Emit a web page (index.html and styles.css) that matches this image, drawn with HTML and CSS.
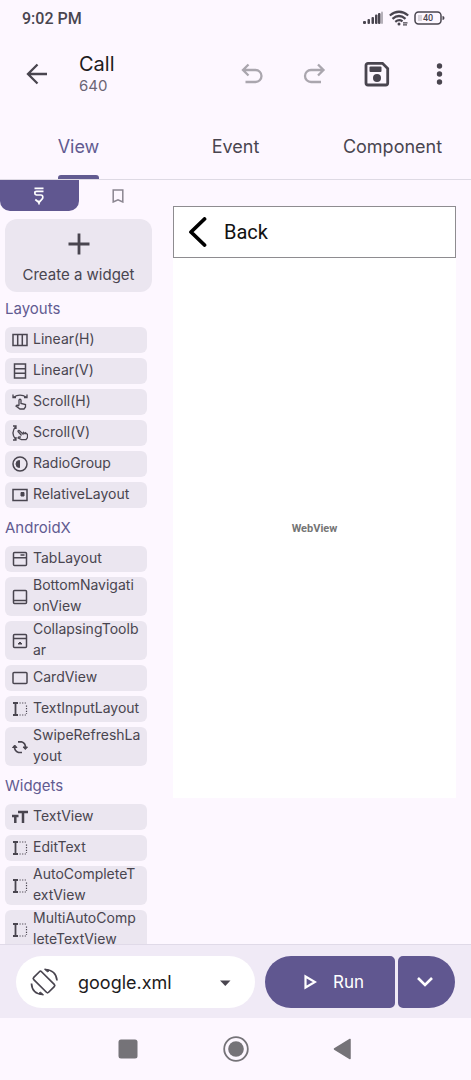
FILE: index.html
```html
<!DOCTYPE html>
<html lang="en">
<head>
    <meta charset="UTF-8">
    <meta name="viewport" content="width=device-width, initial-scale=1.0">
    <title>Call</title>
    <link rel="stylesheet" href="styles.css">
</head>
<body>
    <div class="status-bar">
        <span>9:02 PM</span>
        <div class="status-icons">
            <svg width="21" height="14" viewBox="0 0 21 14" fill="currentColor">
                <rect x="0" y="10" width="3" height="3" rx="1"/>
                <rect x="4.500" y="8" width="2.500" height="5" rx="1"/>
                <rect x="8.500" y="6" width="2.500" height="7" rx="1"/>
                <rect x="12" y="3.500" width="2.500" height="9.500" rx="1"/>
                <rect x="15" y="2" width="2.500" height="11" rx="1"/>
                <rect x="18" y="0.500" width="2" height="12.500" rx="1" opacity="0.400"/>
            </svg>
            <svg width="20" height="16" viewBox="0 0 20 16" fill="none" stroke="currentColor" stroke-width="2.200">
                <path d="M0.800 5.500Q10 -2 19.200 5.500M3.500 8.800Q10 3.200 16.500 8.800M6.300 11.800Q10 8.800 13.500 11.300"/>
                <circle cx="10" cy="14" r="1.500" fill="currentColor" stroke="none"/>
                <path d="M14 12.800h4.500M14 14.800h4" stroke-width="1.300"/>
            </svg>
            <svg width="31" height="14" viewBox="0 0 31 14">
                <rect x="1" y="1" width="26" height="12" rx="3.500" fill="none" stroke="currentColor" stroke-width="1.500"/>
                <rect x="4" y="4" width="4" height="6" fill="#d9d4dc"/>
                <path d="M28.500 5q2 0 2 2t-2 2z" fill="currentColor"/>
                <text x="14" y="10" class="battery-text">40</text>
            </svg>
        </div>
    </div>

    <header class="app-bar">
        <button class="icon-btn" aria-label="Back">
            <svg width="24" height="24" viewBox="0 0 24 24" fill="none" stroke="currentColor" stroke-width="2.300"><path d="M22 12H3.500M12.500 2.500L3 12l9.500 9.500"/></svg>
        </button>
        <div class="titles">
            <h1>Call</h1>
            <p>640</p>
        </div>
        <div class="actions">
            <button class="icon-btn faded" aria-label="Undo">
                <svg width="24" height="24" viewBox="0 0 24 24" fill="none" stroke="currentColor" stroke-width="2.300"><path d="M7.500 2.500L2 8l5.500 5.500M2 8h12.500a6 6 0 0 1 0 12H4.500"/></svg>
            </button>
            <button class="icon-btn faded" aria-label="Redo">
                <svg width="24" height="24" viewBox="0 0 24 24" fill="none" stroke="currentColor" stroke-width="2.300"><path d="M15 2.500L20.500 8 15 13.500M20.500 8H8a6 6 0 0 0 0 12h10"/></svg>
            </button>
            <button class="icon-btn" aria-label="Save">
                <svg width="26" height="26" viewBox="0 0 26 26">
                    <path d="M4 2.300h14.500L23.700 7.500V22a2 2 0 0 1-2 2H4a2 2 0 0 1-2-2V4.300a2 2 0 0 1 2-2z" fill="none" stroke="currentColor" stroke-width="2.800"/>
                    <rect x="5.500" y="5.500" width="12" height="5.500" rx="1" fill="currentColor"/>
                    <circle cx="13" cy="17" r="4" fill="currentColor"/>
                </svg>
            </button>
            <button class="icon-btn" aria-label="More">
                <svg width="24" height="24" viewBox="0 0 24 24" fill="currentColor"><circle cx="12.500" cy="4" r="2.700"/><circle cx="12.500" cy="12" r="2.700"/><circle cx="12.500" cy="20" r="2.700"/></svg>
            </button>
        </div>
    </header>

    <nav class="tabs">
        <button class="tab active"><span>View</span></button>
        <button class="tab"><span>Event</span></button>
        <button class="tab"><span>Component</span></button>
    </nav>

    <main class="editor">
        <aside class="palette">
            <div class="palette-tabs">
                <button class="palette-tab active" aria-label="Widgets">
                    <svg width="12" height="18" viewBox="0 0 12 18" fill="none" stroke="currentColor" stroke-width="1.700"><path d="M1.500 1.300h9M10.500 4.300H3.500Q1.800 4.300 1.800 6t1.700 2h4.300q2 0 2 2.200 0 1.200-.8 2L6 15.500l-3.700-3M6 13.500V17.500"/></svg>
                </button>
                <button class="palette-tab" aria-label="Favorites">
                    <svg width="12" height="14" viewBox="0 0 12 14" fill="none" stroke="currentColor" stroke-width="1.500"><path d="M1.200 1h9.600v12L6 10.800 1.200 13z"/></svg>
                </button>
            </div>

            <button class="create">
                <svg width="24" height="24" viewBox="0 0 24 24" stroke="currentColor" stroke-width="2.800"><path d="M12 1.500v21M1.500 12h21"/></svg>
                Create a widget
            </button>

            <h2>Layouts</h2>
            <button class="chip">
                <svg viewBox="0 0 16 16"><path d="M1 2.500h14v11H1zM5.700 2.500v11M10.300 2.500v11"/></svg>
                <span>Linear(H)</span>
            </button>
            <button class="chip">
                <svg viewBox="0 0 16 16"><path d="M2.500 1h11v14h-11zM2.500 5.700h11M2.500 10.300h11"/></svg>
                <span>Linear(V)</span>
            </button>
            <button class="chip">
                <svg viewBox="0 0 16 16"><path d="M1 0.500v3h3M15 0.500v3h-3M1.500 3.200Q8 -1 14.500 3.200M7 11.500V6q1-1.500 2 0v3.500l4.500 1v2.500l-1.500 2H8L4 12q1-1.500 3 0" stroke-width="1.300"/></svg>
                <span>Scroll(H)</span>
            </button>
            <button class="chip">
                <svg viewBox="0 0 16 16"><path d="M1 1h3v3M1 15h3v-3M3.700 1.500q-5.500 6.500 0 13M9.500 10.500L6 6.500q0-1.500 1.500-.8L11 9l.5-1.500L13 8.800l.5-1 2 1.700v3l-1.500 2.200H9.500L6 13q.5-1.500 3-.8" stroke-width="1.300"/></svg>
                <span>Scroll(V)</span>
            </button>
            <button class="chip">
                <svg viewBox="0 0 16 16"><circle cx="8" cy="8" r="7"/><path class="solid" d="M7.500 4.500a3.500 3.500 0 0 0 0 7z"/></svg>
                <span>RadioGroup</span>
            </button>
            <button class="chip">
                <svg viewBox="0 0 16 16"><path d="M1 2.500h14v11H1z"/><path class="solid" d="M9 5.500h3v3.500H9z"/></svg>
                <span>RelativeLayout</span>
            </button>

            <h2>AndroidX</h2>
            <button class="chip">
                <svg viewBox="0 0 16 16"><rect x="1.500" y="1.500" width="13" height="13" rx="1"/><path d="M1.500 6.800h13M8.500 4h4"/></svg>
                <span>TabLayout</span>
            </button>
            <button class="chip">
                <svg viewBox="0 0 16 16"><rect x="1.500" y="1.500" width="13" height="13" rx="1"/><path d="M1.500 11.500h13"/></svg>
                <span>BottomNavigati<wbr>onView</span>
            </button>
            <button class="chip">
                <svg viewBox="0 0 16 16"><rect x="1.500" y="1.500" width="13" height="13" rx="1"/><path d="M1.500 5.500h13"/><path class="solid" d="M6 11h4L8 9z"/></svg>
                <span>CollapsingToolb<wbr>ar</span>
            </button>
            <button class="chip">
                <svg viewBox="0 0 16 16"><rect x="1" y="2.500" width="14" height="11" rx="1"/></svg>
                <span>CardView</span>
            </button>
            <button class="chip">
                <svg viewBox="0 0 16 16"><path d="M3.500 2v12M1 2h5M1 14h5" stroke-width="1.800"/><path d="M7.500 2h7.500M7.500 14h7.500M14.500 4.500v8.500" stroke-width="1.200" stroke-dasharray="1.200 1.400"/></svg>
                <span>TextInputLayout</span>
            </button>
            <button class="chip">
                <svg viewBox="0 0 16 16"><path d="M6 2.800h3.500q4 1.200 4 5.700M10 13.500H6.500Q2.500 12 2.500 8" stroke-width="1.700"/><path class="solid" d="M11 8h4.500l-2.200 2.500zM.5 8.500H5L2.700 6z"/></svg>
                <span>SwipeRefreshLa<wbr>yout</span>
            </button>

            <h2>Widgets</h2>
            <button class="chip">
                <svg viewBox="0 0 16 16" class="heavy"><path d="M6 3h10M11 3v11M0 7h6.500M3.300 7v7"/></svg>
                <span>TextView</span>
            </button>
            <button class="chip">
                <svg viewBox="0 0 16 16"><path d="M3.500 2v12M1 2h5M1 14h5" stroke-width="1.800"/><path d="M7.500 2h7.500M7.500 14h7.500M14.500 4.500v8.500" stroke-width="1.200" stroke-dasharray="1.200 1.400"/></svg>
                <span>EditText</span>
            </button>
            <button class="chip">
                <svg viewBox="0 0 16 16"><path d="M3.500 2v12M1 2h5M1 14h5" stroke-width="1.800"/><path d="M7.500 2h7.500M7.500 14h7.500M14.500 4.500v8.500" stroke-width="1.200" stroke-dasharray="1.200 1.400"/></svg>
                <span>AutoCompleteT<wbr>extView</span>
            </button>
            <button class="chip">
                <svg viewBox="0 0 16 16"><path d="M3.500 2v12M1 2h5M1 14h5" stroke-width="1.800"/><path d="M7.500 2h7.500M7.500 14h7.500M14.500 4.500v8.500" stroke-width="1.200" stroke-dasharray="1.200 1.400"/></svg>
                <span>MultiAutoComp<wbr>leteTextView</span>
            </button>
        </aside>

        <section class="preview">
            <div class="preview-bar">
                <svg width="20" height="30" viewBox="0 0 20 30" fill="none" stroke="#000" stroke-width="3.800" stroke-linecap="round" stroke-linejoin="round"><path d="M16.500 2L3 15l13.500 13"/></svg>
                <span>Back</span>
            </div>
            <div class="webview">WebView</div>
        </section>
    </main>

    <footer class="bottom-bar">
        <div class="file-picker">
            <svg class="rotate" width="28" height="28" viewBox="0 0 28 28" fill="none" stroke="currentColor" stroke-width="1.700">
                <rect x="8.500" y="3.500" width="11" height="21" rx="1.500" transform="rotate(-45 14 14)"/>
                <path d="M15 1.500Q26 2 27 12.500M13 26.500Q2 26 1.500 15.500"/>
                <path d="M14.500 1l5 1.500-2 1.500zM13.500 27l-5-1.500 2-1.500z" fill="currentColor" stroke-width="1"/>
            </svg>
            <select aria-label="Layout file">
                <option>google.xml</option>
            </select>
            <svg class="caret" width="11" height="6" viewBox="0 0 11 6" fill="currentColor"><path d="M0 0.500h10.500L5.300 6z"/></svg>
        </div>
        <div class="run-group">
            <button class="run">
                <svg width="13" height="16" viewBox="0 0 13 16" fill="none" stroke="currentColor" stroke-width="2.200"><path d="M1.500 2.500v11L11 8z"/></svg>
                Run
            </button>
            <button class="run-more" aria-label="Run options">
                <svg width="16" height="12" viewBox="0 0 16 12" fill="none" stroke="currentColor" stroke-width="2.600"><path d="M1 2l7 7 7-7"/></svg>
            </button>
        </div>
    </footer>

    <div class="system-nav">
        <button aria-label="Recents"><svg width="26" height="26" viewBox="0 0 26 26"><rect x="3.500" y="3.500" width="19" height="19" rx="2.500" fill="currentColor"/></svg></button>
        <button aria-label="Home"><svg width="26" height="26" viewBox="0 0 26 26"><circle cx="13" cy="13" r="11.800" fill="none" stroke="currentColor" stroke-width="1.800"/><circle cx="13" cy="13" r="7.800" fill="currentColor"/></svg></button>
        <button aria-label="Back"><svg width="26" height="26" viewBox="0 0 26 26"><path d="M3.500 13L19 3.500v19z" fill="currentColor" stroke="currentColor" stroke-width="1.500" stroke-linejoin="round"/></svg></button>
    </div>
</body>
</html>
```
FILE: styles.css
```css
* {
    box-sizing: border-box;
}
body {
    margin: 0;
    height: 100vh;
    display: flex;
    flex-direction: column;
    font-family: Inter, "Liberation Sans", sans-serif;
    color: #49454f;
    background-color: #fdf7ff;
}
button {
    font-family: inherit;
    color: inherit;
    background: none;
    border: none;
    padding: 0;
    cursor: pointer;
}
h1, h2, p {
    margin: 0;
    font-weight: normal;
}
svg {
    flex-shrink: 0;
}

/* Status bar */
.status-bar {
    height: 36px;
    padding: 0 26px 0 22px;
    display: flex;
    justify-content: space-between;
    align-items: center;
    font-family: Roboto, sans-serif;
    font-size: 16px;
    font-weight: 500;
}
.status-icons {
    display: flex;
    align-items: center;
    gap: 5px;
}
.battery-text {
    font-size: 9px;
    text-anchor: middle;
    fill: currentColor;
}

/* App bar */
.app-bar {
    height: 76px;
    padding: 0 8px 0 13px;
    display: flex;
    align-items: center;
}
.icon-btn {
    width: 48px;
    height: 48px;
    display: flex;
    justify-content: center;
    align-items: center;
}
.faded {
    color: #aaa6ae;
}
.titles {
    flex: 1;
    margin-left: 18px;
}
.titles h1 {
    font-size: 20px;
    line-height: 24px;
    color: #1d1b20;
}
.titles p {
    font-size: 15px;
    line-height: 20px;
    color: #6b6574;
}
.actions {
    display: flex;
    gap: 14px;
}

/* Tabs */
.tabs {
    height: 68px;
    display: flex;
    border-bottom: 1px solid #dedae4;
}
.tab {
    flex: 1;
    display: flex;
    justify-content: center;
    font-size: 18px;
}
.tab span {
    height: 100%;
    padding-top: 23px;
    line-height: 24px;
}
.tab.active {
    color: #625b91;
}
.tab.active span {
    position: relative;
}
.tab.active span::after {
    content: "";
    position: absolute;
    left: 0;
    right: 0;
    bottom: 0;
    height: 4px;
    border-radius: 3px 3px 0 0;
    background-color: #625b91;
}

/* Editor */
.editor {
    flex: 1;
    min-height: 0;
    display: flex;
    align-items: flex-start;
    overflow: hidden;
}
.palette {
    width: 157px;
    flex-shrink: 0;
}
.palette-tabs {
    display: flex;
    height: 31px;
}
.palette-tab {
    flex: 1;
    display: flex;
    justify-content: center;
    align-items: center;
    color: #8b8691;
    border-radius: 0 0 10px 10px;
}
.palette-tab.active {
    color: white;
    background-color: #605790;
}
.create {
    width: 147px;
    height: 73px;
    margin: 8px 5px 2px;
    padding-top: 6px;
    display: flex;
    flex-direction: column;
    align-items: center;
    justify-content: center;
    gap: 9px;
    font-size: 15px;
    line-height: 20px;
    border-radius: 12px;
    background-color: #ebe6f0;
}
.palette h2 {
    padding: 5px 5px 8px;
    font-size: 15px;
    line-height: 20px;
    color: #625b91;
}
.chip {
    width: 142px;
    min-height: 26px;
    margin: 0 5px 5px;
    padding-left: 7px;
    display: flex;
    align-items: center;
    gap: 5px;
    font-size: 14px;
    line-height: 21px;
    text-align: left;
    border-radius: 6px;
    background-color: #ebe6f0;
}
.chip span {
    margin: -3px 0 0;
}
.chip svg {
    width: 16px;
    height: 16px;
    fill: none;
    stroke: currentColor;
    stroke-width: 1.5;
}
.chip .solid {
    fill: currentColor;
    stroke-width: 1;
}
.chip .heavy {
    stroke-width: 2.5;
}

/* Layout preview */
.preview {
    flex: 1;
    aspect-ratio: 283 / 592;
    margin: 26px 15px 0 16px;
    display: flex;
    flex-direction: column;
    font-family: Roboto, sans-serif;
    background-color: white;
}
.preview-bar {
    height: 52px;
    padding-left: 14px;
    display: flex;
    align-items: center;
    gap: 16px;
    font-size: 20px;
    color: #111;
    border: 1px solid #8e8c90;
}
.webview {
    flex: 1;
    display: flex;
    justify-content: center;
    align-items: center;
    font-size: 11px;
    font-weight: bold;
    color: #757575;
}

/* Bottom bar */
.bottom-bar {
    padding: 11px 16px 10px;
    display: flex;
    gap: 10px;
    border-top: 1px solid #e0dae8;
    background-color: #f0eaf6;
}
.file-picker {
    position: relative;
    flex: 1;
}
.file-picker select {
    width: 100%;
    height: 52px;
    padding: 0 40px 0 62px;
    font-family: inherit;
    font-size: 18px;
    color: #1d1b20;
    appearance: none;
    border: none;
    border-radius: 26px;
    background-color: white;
}
.file-picker svg {
    position: absolute;
    pointer-events: none;
}
.rotate {
    left: 14px;
    top: 12px;
}
.caret {
    right: 24px;
    top: 24px;
}
.run-group {
    display: flex;
    gap: 3px;
}
.run, .run-more {
    height: 52px;
    display: flex;
    align-items: center;
    justify-content: center;
    color: white;
    background-color: #605790;
}
.run {
    width: 130px;
    gap: 16px;
    padding-left: 8px;
    font-size: 17px;
    border-radius: 26px 5px 5px 26px;
}
.run-more {
    width: 57px;
    padding-right: 4px;
    border-radius: 5px 26px 26px 5px;
}

/* System navigation */
.system-nav {
    height: 62px;
    display: flex;
    justify-content: center;
    align-items: center;
    gap: 82px;
    color: #757378;
}
.system-nav button {
    display: flex;
}
```
